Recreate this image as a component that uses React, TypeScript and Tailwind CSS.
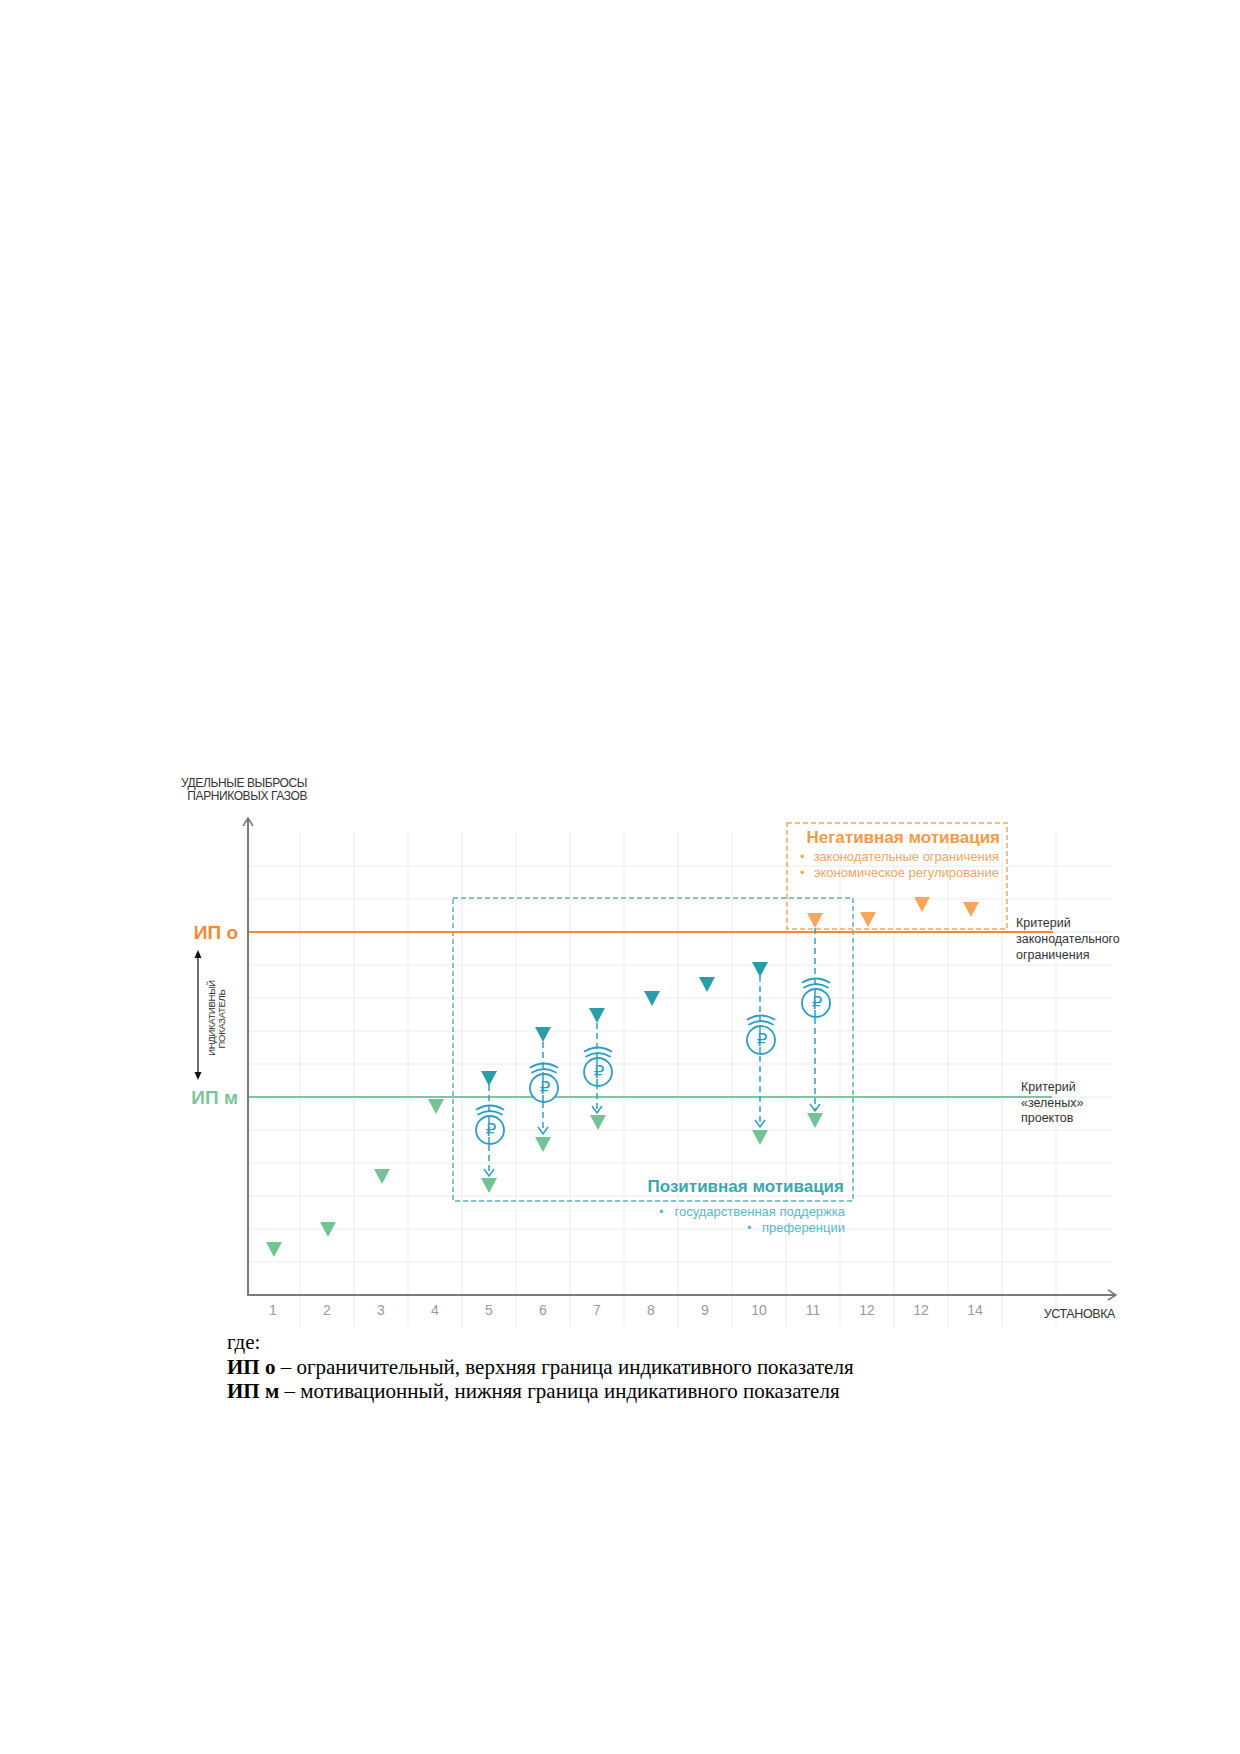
import React from 'react';

const ORANGE = '#F28A35';
const ORANGE_LIGHT = '#F9A65C';
const GREEN = '#7CC7A0';
const GREEN_TRI = '#73C394';
const TEAL = '#2A9DAB';
const BLUE = '#2E9DC6';
const BOX_TEAL = '#56B3C4';

const SANS = '"Liberation Sans", Arial, sans-serif';

const colCenter = (i: number) => 273 + 54 * (i - 1);

type Tri = { x: number; top: number; color: string };

const triangles: Tri[] = [
  { x: 274, top: 1242, color: GREEN_TRI },
  { x: 328, top: 1222, color: GREEN_TRI },
  { x: 382, top: 1169, color: GREEN_TRI },
  { x: 436, top: 1099, color: GREEN_TRI },
  { x: 489, top: 1178, color: GREEN_TRI },
  { x: 543, top: 1137, color: GREEN_TRI },
  { x: 598, top: 1115, color: GREEN_TRI },
  { x: 760, top: 1130, color: GREEN_TRI },
  { x: 815, top: 1113, color: GREEN_TRI },
  { x: 489, top: 1071, color: TEAL },
  { x: 543, top: 1027, color: TEAL },
  { x: 597, top: 1008, color: TEAL },
  { x: 652, top: 991, color: TEAL },
  { x: 707, top: 977, color: TEAL },
  { x: 760, top: 962, color: TEAL },
  { x: 815, top: 913, color: ORANGE_LIGHT },
  { x: 868, top: 912, color: ORANGE_LIGHT },
  { x: 922, top: 897, color: ORANGE_LIGHT },
  { x: 971, top: 902, color: ORANGE_LIGHT },
];

// dashed drops: x, from, arrow tip y, icon centre y
const drops = [
  { x: 489, from: 1085, to: 1176, icon: 1130 },
  { x: 543, from: 1042, to: 1134, icon: 1088 },
  { x: 597, from: 1023, to: 1113, icon: 1072 },
  { x: 760, from: 976, to: 1127, icon: 1040 },
  { x: 815, from: 928, to: 1111, icon: 1003 },
];

const labels = ['1', '2', '3', '4', '5', '6', '7', '8', '9', '10', '11', '12', '12', '14'];

function RubleIcon({ x, y }: { x: number; y: number }) {
  return (
    <g stroke={BLUE} strokeWidth={1.8} fill="none" strokeLinecap="round">
      <circle cx={x} cy={y} r={14} fill="white" />
      <path d={`M ${x - 12} ${y - 15.5} Q ${x} ${y - 22.5} ${x + 12} ${y - 15.5}`} />
      <path d={`M ${x - 13.5} ${y - 20.5} Q ${x} ${y - 28.5} ${x + 13.5} ${y - 20.5}`} />
      <text
        x={x + 1}
        y={y + 6}
        textAnchor="middle"
        fontSize={17}
        fontFamily={`"DejaVu Sans", ${SANS}`}
        fill={BLUE}
        stroke="none"
      >
        ₽
      </text>
    </g>
  );
}

function Chart() {
  const hLines = Array.from({ length: 13 }, (_, k) => 866 + 33 * k);
  const vLines = Array.from({ length: 15 }, (_, k) => 300 + 54 * k);

  return (
    <svg width={960} height={560} viewBox="170 770 960 560" fontFamily={SANS}>
      {/* grid */}
      <g stroke="#ECECEC" strokeWidth={1}>
        {hLines.map((y) => (
          <line key={`h${y}`} x1={248} x2={1112} y1={y} y2={y} />
        ))}
        {vLines.map((x) => (
          <line key={`v${x}`} x1={x} x2={x} y1={832} y2={1327} />
        ))}
      </g>

      {/* negative motivation box */}
      <rect x={787} y={823} width={220} height={106} fill="none" stroke={ORANGE_LIGHT} strokeWidth={1.5} strokeDasharray="5 3" />
      <text x={1000} y={843} textAnchor="end" fontSize={17} fontWeight={700} fill="#F59A48">
        Негативная мотивация
      </text>
      <g fontSize={13} fill="#F6A462">
        <text x={800} y={861}>•</text>
        <text x={999} y={861} textAnchor="end">законодательные ограничения</text>
        <text x={800} y={877}>•</text>
        <text x={999} y={877} textAnchor="end">экономическое регулирование</text>
      </g>

      {/* positive motivation box */}
      <rect x={453} y={898} width={400} height={303} fill="none" stroke={BOX_TEAL} strokeWidth={1.5} strokeDasharray="5 3" />
      <text x={844} y={1192} textAnchor="end" fontSize={17} fontWeight={700} fill="#3AA7B1">
        Позитивная мотивация
      </text>
      <g fontSize={13} fill="#5BB8C9">
        <text x={659} y={1216}>•</text>
        <text x={845} y={1216} textAnchor="end">государственная поддержка</text>
        <text x={747} y={1232}>•</text>
        <text x={845} y={1232} textAnchor="end">преференции</text>
      </g>

      {/* criterion lines */}
      <line x1={248} x2={1053} y1={932} y2={932} stroke={ORANGE} strokeWidth={2} />
      <line x1={248} x2={1052} y1={1097} y2={1097} stroke={GREEN} strokeWidth={2} />

      {/* dashed drops */}
      {drops.map((d) => (
        <g key={`d${d.x}`} stroke={BLUE} strokeWidth={1.5} fill="none">
          <line x1={d.x} x2={d.x} y1={d.from} y2={d.to - 1} strokeDasharray="6 4" />
          <path d={`M ${d.x - 5} ${d.to - 7} L ${d.x} ${d.to} L ${d.x + 5} ${d.to - 7}`} />
        </g>
      ))}

      {/* triangles */}
      {triangles.map((t, i) => (
        <polygon key={i} points={`${t.x - 8},${t.top} ${t.x + 8},${t.top} ${t.x},${t.top + 15}`} fill={t.color} />
      ))}

      {/* ruble icons */}
      {drops.map((d) => (
        <g key={`i${d.x}`}>
          <RubleIcon x={d.x + 1} y={d.icon} />
          <line x1={d.x} x2={d.x} y1={d.icon - 13} y2={d.icon + 13} stroke={BLUE} strokeWidth={1.5} strokeDasharray="6 4" />
        </g>
      ))}

      {/* axes */}
      <g stroke="#7A7A7A" strokeWidth={2} fill="none">
        <line x1={248} x2={248} y1={818} y2={1296} />
        <line x1={247} x2={1116} y1={1295} y2={1295} />
        <path d="M 243 826 L 248 818 L 253 826" strokeWidth={1.6} />
        <path d="M 1108 1290 L 1116 1295 L 1108 1300" strokeWidth={1.6} />
      </g>

      {/* axis labels */}
      <g fill="#333" letterSpacing={-0.4}>
        <text x={307} y={787} textAnchor="end" fontSize={12}>УДЕЛЬНЫЕ ВЫБРОСЫ</text>
        <text x={307} y={800} textAnchor="end" fontSize={12}>ПАРНИКОВЫХ ГАЗОВ</text>
        <text x={1115} y={1318} textAnchor="end" fontSize={12.5}>УСТАНОВКА</text>
      </g>
      <g fontSize={14} fill="#9A9A9A" textAnchor="middle">
        {labels.map((l, i) => (
          <text key={i} x={colCenter(i + 1)} y={1315}>
            {l}
          </text>
        ))}
      </g>

      {/* left labels */}
      <text x={238} y={939} textAnchor="end" fontSize={19} fontWeight={700} fill={ORANGE}>
        ИП о
      </text>
      <text x={238} y={1104} textAnchor="end" fontSize={19} fontWeight={700} fill="#7CC49E">
        ИП м
      </text>
      <g stroke="#111" strokeWidth={1.2}>
        <line x1={198} x2={198} y1={957} y2={1073} />
      </g>
      <polygon points="198,950 194.5,958 201.5,958" fill="#111" />
      <polygon points="198,1080 194.5,1072 201.5,1072" fill="#111" />
      <g fontSize={9.5} fill="#333" textAnchor="middle" letterSpacing={-0.3}>
        <text x={0} y={0} transform="translate(215 1018) rotate(-90)">ИНДИКАТИВНЫЙ</text>
        <text x={0} y={0} transform="translate(225 1019) rotate(-90)">ПОКАЗАТЕЛЬ</text>
      </g>

      {/* criteria text */}
      <g fontSize={12.5} fill="#333">
        <text x={1016} y={927}>Критерий</text>
        <text x={1016} y={943}>законодательного</text>
        <text x={1016} y={959}>ограничения</text>
        <text x={1021} y={1091}>Критерий</text>
        <text x={1021} y={1107}>«зеленых»</text>
        <text x={1021} y={1122}>проектов</text>
      </g>
    </svg>
  );
}

export default function App() {
  return (
    <div className="w-[1240px] h-[1754px] bg-white flex flex-col">
      <div className="pt-[770px] pl-[170px]">
        <Chart />
      </div>
      <div
        className="pl-[227px] text-[21px] leading-[24.5px] text-black"
        style={{ fontFamily: '"Liberation Serif", "Times New Roman", serif' }}
      >
        <p>где:</p>
        <p>
          <b>ИП о</b> – ограничительный, верхняя граница индикативного показателя
        </p>
        <p>
          <b>ИП м</b> – мотивационный, нижняя граница индикативного показателя
        </p>
      </div>
    </div>
  );
}
